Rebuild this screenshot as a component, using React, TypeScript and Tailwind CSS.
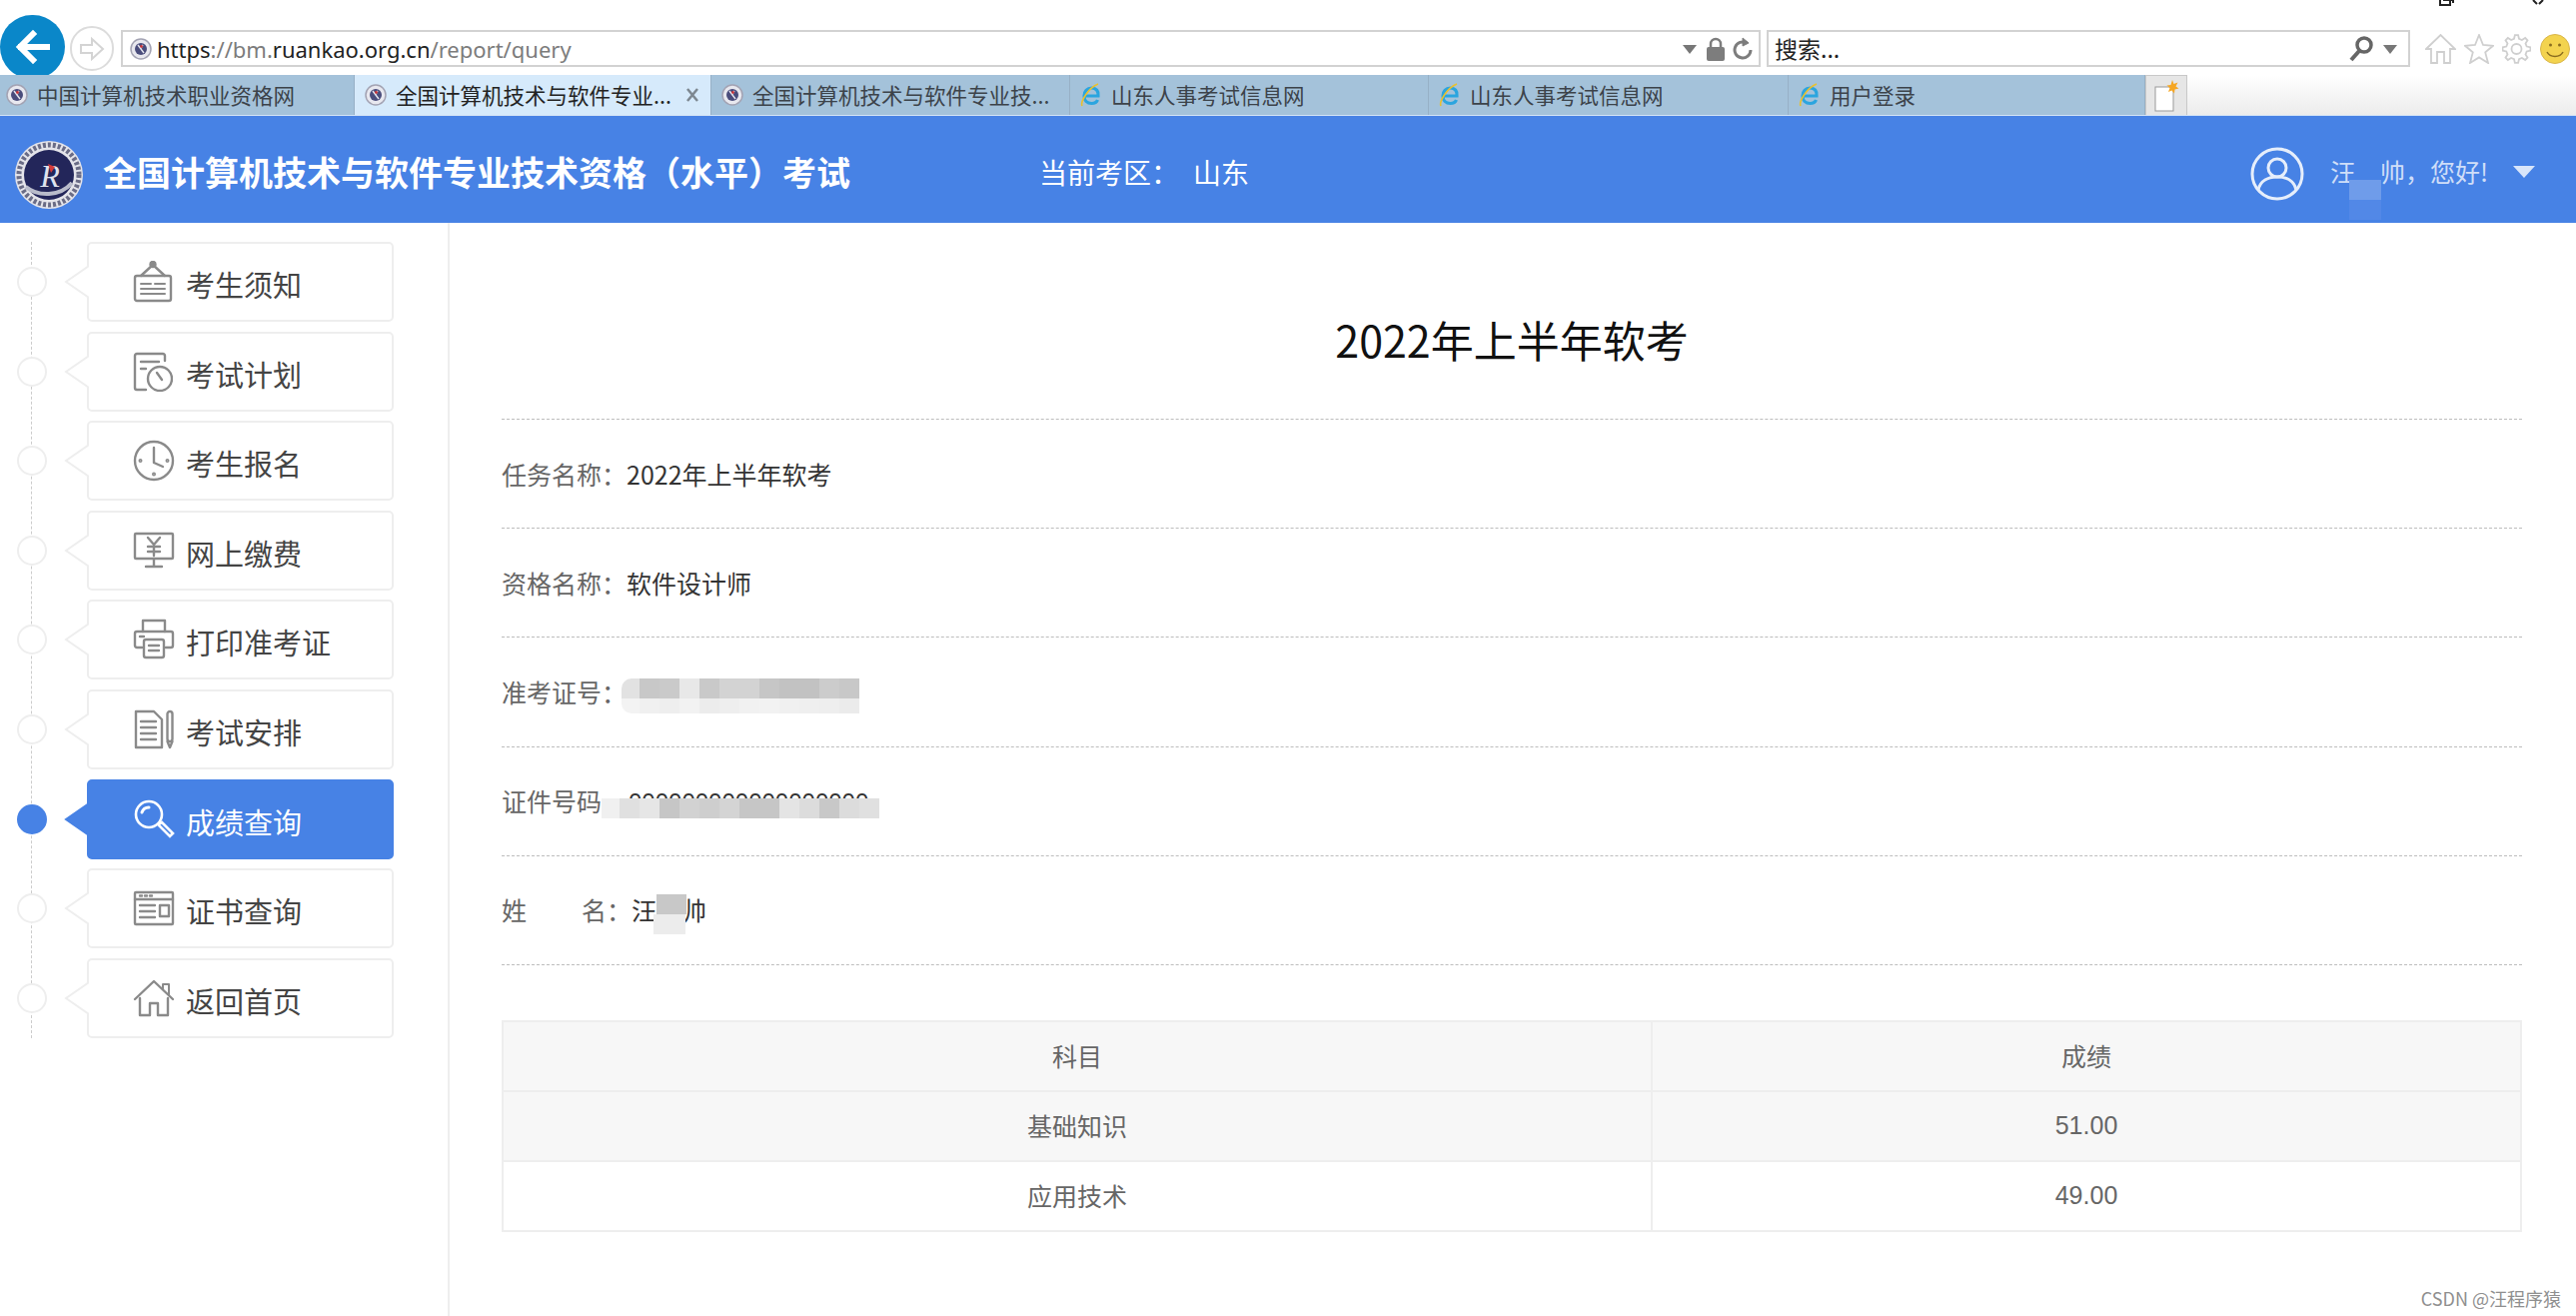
import React from 'react';

const Favicon = () => (
  <svg width="22" height="24" viewBox="0 0 22 24" className="shrink-0">
    <circle cx="11" cy="12" r="10" fill="#e8e8ef" stroke="#a3a3b3" strokeWidth="1.5" />
    <circle cx="11" cy="12" r="6" fill="#4a4d7c" />
    <path d="M8 8l6 8M13 8l-2 3" stroke="#e6e6f0" strokeWidth="1.4" fill="none" />
    <circle cx="11.5" cy="9.5" r="1.4" fill="#c8353a" />
  </svg>
);

const IeIcon = () => (
  <svg width="22" height="26" viewBox="0 0 22 26" className="shrink-0">
    <path d="M5 14h13c.6-5-2-8-6.500-8S4 9.500 4 14s3 7.500 7.500 7.500c3 0 5-1 6-3.500" fill="none" stroke="#2ba5df" strokeWidth="3.200" />
    <path d="M2 24C0 20 8 6 18 2" fill="none" stroke="#e9c02e" strokeWidth="1.600" />
  </svg>
);

const SiteLogo = () => (
  <svg width="70" height="70" viewBox="0 0 70 70" className="mt-[7px] shrink-0">
    <circle cx="35" cy="35" r="34" fill="#e4e4ea" />
    <circle cx="35" cy="35" r="30" fill="none" stroke="#6a6c86" strokeWidth="5" strokeDasharray="3 2" />
    <circle cx="35" cy="35" r="25" fill="#23265a" />
    <path d="M12 47c12 10 34 10 46-4" fill="none" stroke="#b9bccb" strokeWidth="4" />
    <text x="36" y="47" textAnchor="middle" fontSize="32" fontStyle="italic" fill="#dfe2ee" fontFamily="Liberation Serif">R</text>
    <path d="M34 24l7 3-4 6z" fill="#d33a3a" />
  </svg>
);

const gearPath = () => {
  const pts: string[] = [];
  const teeth = 8;
  for (let i = 0; i < teeth; i++) {
    const a = (i / teeth) * Math.PI * 2;
    const step = Math.PI / teeth;
    [
      [-0.62, 10.500],
      [-0.3, 14],
      [0.3, 14],
      [0.62, 10.500],
    ].forEach(([o, r]) => {
      const t = a + o * step;
      pts.push(`${(14.5 + r * Math.cos(t)).toFixed(1)} ${(15 + r * Math.sin(t)).toFixed(1)}`);
    });
  }
  return `M${pts.join('L')}Z`;
};

const ICON = { fill: 'none', stroke: 'currentColor', strokeWidth: 2.4, strokeLinecap: 'round' as const, strokeLinejoin: 'round' as const };

const NoticeIcon = () => (
  <svg width="40" height="42" viewBox="0 0 40 42" {...ICON}>
    <circle cx="20" cy="3.500" r="2.500" fill="currentColor" />
    <path d="M20 4L8 15M20 4l12 11" />
    <rect x="2" y="15" width="36" height="25" rx="2" />
    <path d="M8 23h10M22 23h10M8 28h24M8 33h24" strokeWidth="2" />
  </svg>
);

const PlanIcon = () => (
  <svg width="40" height="40" viewBox="0 0 40 40" {...ICON}>
    <path d="M32 9V4a2 2 0 0 0-2-2H4a2 2 0 0 0-2 2v32a2 2 0 0 0 2 2h9" />
    <path d="M8 10h18M8 17h5" />
    <circle cx="27" cy="27" r="12" />
    <path d="M24 21l5 7" />
  </svg>
);

const ClockIcon = () => (
  <svg width="42" height="42" viewBox="0 0 42 42" {...ICON}>
    <circle cx="21" cy="21" r="19" />
    <path d="M21 8v15l9 4" />
    <circle cx="7.500" cy="21" r=".8" />
    <circle cx="34.500" cy="21" r=".8" />
    <circle cx="21" cy="34.500" r=".8" />
  </svg>
);

const PayIcon = () => (
  <svg width="42" height="38" viewBox="0 0 42 38" {...ICON}>
    <rect x="2" y="2" width="38" height="25" rx="1" />
    <path d="M15 6l6 7 6-7M21 13v11M15 15h12M15 20h12M21 27v7M13 35h16" />
  </svg>
);

const PrintIcon = () => (
  <svg width="42" height="42" viewBox="0 0 42 42" {...ICON}>
    <path d="M10 13V2h22v11" />
    <path d="M9 29H4a2 2 0 0 1-2-2V15a2 2 0 0 1 2-2h34a2 2 0 0 1 2 2v12a2 2 0 0 1-2 2h-5" />
    <rect x="11" y="21" width="20" height="18" rx="2" />
    <path d="M16 27h10M16 32h10M7 18h4" />
  </svg>
);

const ArrangeIcon = () => (
  <svg width="42" height="40" viewBox="0 0 42 40" {...ICON}>
    <path d="M3 2h18l8 8v28H3z" />
    <path d="M8 12h15M8 18h15M8 24h15M8 30h15" />
    <rect x="34.500" y="2" width="5" height="30" rx="2.500" />
    <path d="M34.500 32l2.500 6 2.500-6" />
  </svg>
);

const SearchIcon = () => (
  <svg width="42" height="42" viewBox="0 0 42 42" fill="none" stroke="currentColor" strokeWidth="2.600" strokeLinecap="round">
    <circle cx="16" cy="16" r="13" />
    <path d="M9 14c1-3 3-5 7-5" strokeWidth="3" />
    <path d="M26 26l3-2 11 11-3 3-11-11z" />
  </svg>
);

const CertIcon = () => (
  <svg width="42" height="36" viewBox="0 0 42 36" {...ICON}>
    <rect x="2" y="2" width="38" height="32" rx="1" />
    <path d="M2 9h38M7 5.500h2M12 5.500h2M17 5.500h2" />
    <path d="M7 15h15M7 21h15M7 27h15" />
    <rect x="27" y="15" width="9" height="11" />
  </svg>
);

const HomeIcon = () => (
  <svg width="42" height="38" viewBox="0 0 42 38" {...ICON}>
    <path d="M2 20L21 2l19 18" />
    <path d="M30 10V5h6v11" strokeWidth="2" />
    <path d="M7 19v17h10V24h8v12h10V19" />
  </svg>
);

const MENU = [
  { label: '考生须知', icon: <NoticeIcon /> },
  { label: '考试计划', icon: <PlanIcon /> },
  { label: '考生报名', icon: <ClockIcon /> },
  { label: '网上缴费', icon: <PayIcon /> },
  { label: '打印准考证', icon: <PrintIcon /> },
  { label: '考试安排', icon: <ArrangeIcon /> },
  { label: '成绩查询', icon: <SearchIcon />, active: true },
  { label: '证书查询', icon: <CertIcon /> },
  { label: '返回首页', icon: <HomeIcon /> },
];

const TABS = [
  { title: '中国计算机技术职业资格网', width: 'w-[355px] pl-[6px]', ie: false },
  { title: '全国计算机技术与软件专业...', width: 'w-[357px] pl-[10px]', ie: false, active: true },
  { title: '全国计算机技术与软件专业技...', width: 'w-[359px] pl-[10px]', ie: false },
  { title: '山东人事考试信息网', width: 'w-[359px] pl-[10px]', ie: true },
  { title: '山东人事考试信息网', width: 'w-[360px] pl-[10px]', ie: true },
  { title: '用户登录', width: 'w-[357px] pl-[10px]', ie: true },
];

const TICKET_TOP = ['w-[18px] rounded-tl-[10px] bg-[#e2e2e2]', 'w-[20px] bg-[#c8c8c8]', 'w-[20px] bg-[#cacaca]', 'w-[20px] bg-[#e8e8e8]', 'w-[20px] bg-[#c9c9c9]', 'w-[20px] bg-[#d3d3d3]', 'w-[20px] bg-[#d3d3d3]', 'w-[20px] bg-[#c6c6c6]', 'w-[20px] bg-[#c2c2c2]', 'w-[20px] bg-[#c2c2c2]', 'w-[20px] bg-[#cccccc]', 'w-[20px] bg-[#c8c8c8]'];
const TICKET_BOTTOM = ['w-[18px] rounded-bl-[10px] bg-[#f3f3f3]', 'w-[20px] bg-[#f0f0f0]', 'w-[20px] bg-[#eeeeee]', 'w-[20px] bg-[#f2f2f2]', 'w-[20px] bg-[#ececec]', 'w-[20px] bg-[#eeeeee]', 'w-[20px] bg-[#f1f1f1]', 'w-[20px] bg-[#f2f2f2]', 'w-[20px] bg-[#f0f0f0]', 'w-[20px] bg-[#efefef]', 'w-[20px] bg-[#eeeeee]', 'w-[20px] bg-[#ebebeb]'];
const ID_CELLS = ['w-[18px] bg-[#f0f0f0]', 'w-[20px] bg-[#e0e0e0]', 'w-[20px] bg-[#e6e6e6]', 'w-[20px] bg-[#c6c6c6]', 'w-[20px] bg-[#d2d2d2]', 'w-[20px] bg-[#cecece]', 'w-[20px] bg-[#d4d4d4]', 'w-[20px] bg-[#c6c6c6]', 'w-[20px] bg-[#c6c6c6]', 'w-[20px] bg-[#e4e4e4]', 'w-[20px] bg-[#dcdcdc]', 'w-[20px] bg-[#c8c8c8]', 'w-[20px] bg-[#dcdcdc]', 'w-[20px] bg-[#e0e0e0]'];

const Toolbar = () => (
  <div className="flex h-[75px] shrink-0 items-center overflow-hidden bg-white pt-[22px]">
    <div className="-mt-[3px] flex h-[64px] w-[65px] shrink-0 items-center justify-center rounded-full bg-[#0a87c9]">
      <svg width="36" height="36" viewBox="0 0 36 36" fill="none" stroke="white" strokeWidth="6" strokeLinecap="square">
        <path d="M18 5L5 18l13 13M6 18h26" />
      </svg>
    </div>
    <div className="ml-[5px] flex h-[45px] w-[44px] shrink-0 items-center justify-center rounded-full border-2 border-[#dcdcdc]">
      <svg width="28" height="26" viewBox="0 0 28 26" fill="none" stroke="#d4d4d4" strokeWidth="2">
        <path d="M14 3l11 10-11 10v-6H3V9h11z" />
      </svg>
    </div>
    <div className="ml-[7px] flex h-[37px] w-[1641px] shrink-0 items-center border-2 border-[#d2d2d2] pl-[7px] pr-[6px]">
      <Favicon />
      <div className="ml-[5px] font-['Noto_Sans','Liberation_Sans',sans-serif] text-[22px] leading-none text-[#7c7c7c]">
        <span className="text-[#222]">https</span>://bm.<span className="text-[#222]">ruankao.org.cn</span>/report/query
      </div>
      <svg width="14" height="10" viewBox="0 0 14 10" className="ml-auto"><path d="M0 1h14L7 10z" fill="#777" /></svg>
      <svg width="20" height="24" viewBox="0 0 20 24" className="ml-[9px]">
        <path d="M5 11V7a5 5 0 0 1 10 0v4" fill="none" stroke="#7d7d7d" strokeWidth="2.500" />
        <rect x="1" y="10" width="18" height="14" rx="2" fill="#7d7d7d" />
      </svg>
      <svg width="20" height="24" viewBox="0 0 20 24" className="ml-[7px]" fill="none" stroke="#7d7d7d" strokeWidth="3">
        <path d="M14 6a8 8 0 1 0 4 7" />
        <path d="M10 1l6 5-6 3z" fill="#7d7d7d" strokeWidth="1" />
      </svg>
    </div>
    <div className="ml-[6px] flex h-[37px] w-[644px] shrink-0 items-center border-2 border-[#d2d2d2] pl-[6px] pr-[11px]">
      <span className="text-[23px] leading-none text-[#222]">搜索...</span>
      <svg width="26" height="28" viewBox="0 0 26 28" fill="none" stroke="#666" className="ml-auto">
        <circle cx="16" cy="10" r="7" strokeWidth="3.500" />
        <path d="M11 16L3 25" strokeWidth="4" />
      </svg>
      <svg width="14" height="10" viewBox="0 0 14 10" className="ml-[9px]"><path d="M0 1h14L7 10z" fill="#777" /></svg>
    </div>
    <div className="ml-[15px] flex items-center gap-[8px]">
      <svg width="31" height="30" viewBox="0 0 31 30" fill="none" stroke="#cfcfcf" strokeWidth="1.800">
        <path d="M1 15L15.500 1 30 15h-5v14h-6V18h-7v11H6V15z" />
      </svg>
      <svg width="30" height="30" viewBox="0 0 30 30" fill="none" stroke="#cfcfcf" strokeWidth="1.800">
        <path d="M15 1l4 10 10 .8-7.800 6.600L24 29l-9-5.600L6 29l2.800-10.600L1 11.800 11 11z" />
      </svg>
      <svg width="29" height="30" viewBox="0 0 29 30" fill="none" stroke="#cfcfcf" strokeWidth="1.800">
        <circle cx="14.500" cy="15" r="5" />
        <path d={gearPath()} />
      </svg>
      <svg width="30" height="30" viewBox="0 0 30 30" className="ml-[1px]">
        <circle cx="15" cy="15" r="14.500" fill="#f3d34e" stroke="#d9b64a" />
        <circle cx="10.500" cy="11" r="1.500" fill="#8a6d1f" />
        <circle cx="19.500" cy="11" r="1.500" fill="#8a6d1f" />
        <path d="M7 18c3 6 13 6 16 0" fill="none" stroke="#8a6d1f" strokeWidth="1.500" />
      </svg>
    </div>
  </div>
);

const TabBar = () => (
  <div className="flex h-[41px] shrink-0 border-b border-[#d3e3f6]">
    {TABS.map((tab, i) => (
      <div
        key={i}
        className={`flex shrink-0 items-center gap-[9px] border-r border-[#97b0c6] ${tab.width} ${tab.active ? 'bg-[#d6eafb]' : 'bg-[#a4c2da]'}`}
      >
        {tab.ie ? <IeIcon /> : <Favicon />}
        <span className={`text-[21.500px] leading-none ${tab.active ? 'text-[#222]' : 'text-[#3c434a]'}`}>{tab.title}</span>
        {tab.active && (
          <svg width="14" height="16" viewBox="0 0 14 16" className="ml-auto mr-[11px]" stroke="#7d8790" strokeWidth="2.500">
            <path d="M2 2l10 12M12 2L2 14" />
          </svg>
        )}
      </div>
    ))}
    <div className="flex w-[42px] shrink-0 items-center justify-center border-x border-t border-[#c8c8c8] bg-[#e6e6e6]">
      <svg width="26" height="32" viewBox="0 0 26 32">
        <rect x="2" y="7" width="18" height="24" fill="white" stroke="#999" />
        <path d="M19 0l1.500 4 4-1.500-2 4 3 2-4 1-.5 4-2.500-3-3.500 1.500 1.500-4-3-2.500 4-.5z" fill="#f5a623" />
      </svg>
    </div>
    <div className="flex-1 bg-gradient-to-b from-white to-[#ececec]" />
  </div>
);

const Header = () => (
  <div className="flex h-[107px] shrink-0 items-center bg-[#4782e5] pl-[14px] pt-[4px] text-white">
    <SiteLogo />
    <div className="ml-[19px] w-[937px] text-[34px] font-bold leading-none">全国计算机技术与软件专业技术资格（水平）考试</div>
    <div className="text-[28px] leading-none">当前考区：<span className="ml-[14px]">山东</span></div>
    <svg width="54" height="54" viewBox="0 0 54 54" fill="none" stroke="#e6eefb" strokeWidth="3" className="ml-auto mt-[4px]">
      <circle cx="27" cy="27" r="25" />
      <circle cx="27" cy="21" r="9" />
      <path d="M8 43c2-9 10-13 19-13s17 4 19 13" />
    </svg>
    <div className="relative ml-[26px] text-[25px] leading-none text-[#cfdef8]">
      汪<span className="relative inline-block w-[25px]">
        <span className="absolute -left-[6px] -top-[2px] h-[20px] w-[32px] bg-[#6f9cea]" />
        <span className="absolute -left-[6px] top-[18px] h-[20px] w-[32px] bg-[#5288e7]" />
      </span>帅，您好!
    </div>
    <svg width="22" height="12" viewBox="0 0 22 12" className="ml-[25px] mr-[41px]"><path d="M0 0h22L11 12z" fill="#d8e5fa" /></svg>
  </div>
);

const Sidebar = () => (
  <div className="relative flex w-[450px] shrink-0 flex-col gap-[9.600px] border-r-2 border-[#eeeeee] pt-[19px]">
    <div className="absolute bottom-[278px] left-[31px] top-[19px] border-l border-dashed border-[#cccccc]" />
    {MENU.map(item => (
      <div key={item.label} className="relative flex items-center pl-[17px]">
        <div className={`h-[30px] w-[30px] shrink-0 rounded-full border-2 ${item.active ? 'border-[#4782e5] bg-[#4782e5]' : 'border-[#eeeeee] bg-white'}`} />
        <div
          className={`relative ml-[40px] flex h-[80px] w-[307px] shrink-0 items-center rounded-[5px] border-2 pl-[44px] ${item.active ? 'border-[#4782e5] bg-[#4782e5] text-white' : 'border-[#eeeeee] bg-white text-[#8a8a8a]'}`}
        >
          <svg width="25" height="36" viewBox="0 0 25 36" className="absolute -left-[25px] top-[20px]">
            <path d="M25 2L2 18l23 16" fill={item.active ? '#4782e5' : 'white'} stroke={item.active ? '#4782e5' : '#eeeeee'} strokeWidth="2" />
          </svg>
          <div className="flex w-[54px] shrink-0 justify-start">{item.icon}</div>
          <span className={`ml-[-1px] mt-[5px] text-[29px] leading-none ${item.active ? 'text-white' : 'text-[#444]'}`}>{item.label}</span>
        </div>
      </div>
    ))}
  </div>
);

const Row = ({ children }: { children: React.ReactNode }) => (
  <div className="flex h-[109.200px] items-center border-b border-dashed border-[#bdbdbd] text-[25px] leading-none text-[#666]">{children}</div>
);

const Main = () => (
  <div className="min-w-0 flex-1 pl-[52px] pr-[54px]">
    <div className="h-[197px] border-b border-dashed border-[#bdbdbd] pt-[86px] text-center text-[43px] leading-[60px] text-[#111]">2022年上半年软考</div>
    <Row>任务名称：<span className="text-[#333]">2022年上半年软考</span></Row>
    <Row>资格名称：<span className="text-[#333]">软件设计师</span></Row>
    <Row>
      准考证号：
      <div className="-ml-[5px] mt-[8px] flex flex-col">
        <div className="flex h-[20px]">{TICKET_TOP.map((c, i) => <div key={i} className={c} />)}</div>
        <div className="flex h-[15px]">{TICKET_BOTTOM.map((c, i) => <div key={i} className={c} />)}</div>
      </div>
    </Row>
    <Row>
      证件号码
      <div className="mt-[10px] flex flex-col">
        <div className="h-[5px] overflow-hidden pl-[27px] font-['Liberation_Sans',sans-serif] text-[24px] leading-none text-[#333]">
          <div className="-mt-[3px]">000000000000000000</div>
        </div>
        <div className="flex h-[20px]">{ID_CELLS.map((c, i) => <div key={i} className={c} />)}</div>
      </div>
    </Row>
    <Row>
      姓<span className="ml-[55px]">名：</span>
      <span className="text-[#333]">汪</span>
      <span className="relative inline-block h-[25px] w-[25px]">
        <span className="absolute left-0 top-[-3px] h-[20px] w-[30px] bg-[#c8c8c8]" />
        <span className="absolute -left-[3px] top-[17px] h-[20px] w-[32px] bg-[#ececec]" />
      </span>
      <span className="text-[#333]">帅</span>
    </Row>
    <table className="mt-[55px] w-full table-fixed border-collapse text-center text-[25px] text-[#666]">
      <colgroup>
        <col className="w-[1150px]" />
        <col />
      </colgroup>
      <tbody>
        <tr className="h-[70px] bg-[#f7f7f7]">
          <td className="border-2 border-[#eeeeee]">科目</td>
          <td className="border-2 border-[#eeeeee]">成绩</td>
        </tr>
        <tr className="h-[70px] bg-[#f7f7f7]">
          <td className="border-2 border-[#eeeeee]">基础知识</td>
          <td className="border-2 border-[#eeeeee] font-['Liberation_Sans',sans-serif]">51.00</td>
        </tr>
        <tr className="h-[70px]">
          <td className="border-2 border-[#eeeeee]">应用技术</td>
          <td className="border-2 border-[#eeeeee] font-['Liberation_Sans',sans-serif]">49.00</td>
        </tr>
      </tbody>
    </table>
  </div>
);

export default function App() {
  return (
    <div className="relative flex h-[1317px] w-[2578px] flex-col overflow-hidden bg-white font-['Noto_Sans_CJK_SC','Liberation_Sans',sans-serif]">
      {/* window controls, cut off by the capture */}
      <svg width="16" height="6" viewBox="0 0 16 6" className="absolute left-[2441px] top-0 z-10" fill="none" stroke="#222" strokeWidth="2">
        <path d="M1 0v5h10V0M4 0h10v3" />
      </svg>
      <svg width="14" height="5" viewBox="0 0 14 5" className="absolute left-[2533px] top-0 z-10" fill="none" stroke="#222" strokeWidth="2">
        <path d="M2 0l4 4M12 0L8 4" />
      </svg>
      <Toolbar />
      <TabBar />
      <Header />
      <div className="flex min-h-0 flex-1">
        <Sidebar />
        <Main />
      </div>
      <div className="absolute bottom-[9px] right-[15px] text-[18px] leading-none text-[#8f8f8f]">CSDN @汪程序猿</div>
    </div>
  );
}
